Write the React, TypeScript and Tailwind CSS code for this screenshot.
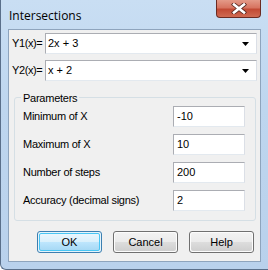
import React from "react";

const font = { fontFamily: '"Liberation Sans", Arial, sans-serif' };

function Combo({ value }: { value: string }) {
  return (
    <div className="flex-1 h-[21px] bg-white border border-[#abadb3] border-b-[#e3e9ef] border-r-[#dbdfe6] flex items-center pl-[2px] pr-[7px] text-[11px] text-black">
      <span className="flex-1">{value}</span>
      <svg width="7" height="4" viewBox="0 0 7 4">
        <path d="M0 0 H7 L3.5 4 Z" fill="#000" />
      </svg>
    </div>
  );
}

function Field({ label, value }: { label: string; value: string }) {
  return (
    <div className="flex items-center h-[21px]">
      <span className="w-[150px] text-[11px] text-black tracking-[-0.25px]">{label}</span>
      <div className="w-[72px] h-[21px] bg-white border border-[#abadb3] border-b-[#e3e9ef] border-r-[#dbdfe6] flex items-center pl-[3px] text-[11px] text-black">
        {value}
      </div>
    </div>
  );
}

function Btn({ label, primary }: { label: string; primary?: boolean }) {
  return primary ? (
    <div className="w-[65px] h-[22px] rounded-[3px] border border-[#3c7fb1] p-[1px] bg-[#e5f4fc]">
      <div className="w-full h-full rounded-[2px] bg-[linear-gradient(#eaf6fd_0%,#d9f0fc_50%,#bee6fd_50%,#a7d9f5_100%)] border border-[#48c6f4] flex items-center justify-center text-[11px] text-black">
        {label}
      </div>
    </div>
  ) : (
    <div className="w-[65px] h-[22px] rounded-[3px] border border-[#707070] p-[1px] bg-[#fcfcfc]">
      <div className="w-full h-full rounded-[2px] bg-[linear-gradient(#f2f2f2_0%,#ebebeb_50%,#dddddd_50%,#cfcfcf_100%)] flex items-center justify-center text-[11px] text-black">
        {label}
      </div>
    </div>
  );
}

export default function App() {
  return (
    <div
      className="w-[268px] h-[270px] relative overflow-hidden bg-[linear-gradient(180deg,#c9def3_0%,#bed6ef_40%,#b9d1ec_100%)] border-l border-b border-[#5a6f8a] rounded-bl-[6px]"
      style={font}
    >
      <div className="h-[29px] flex items-center pl-[8px] pt-[2px] text-[12px] text-black" style={{ fontFamily: '"Open Sans", "Liberation Sans", sans-serif' }}>
        Intersections
      </div>
      <div className="absolute right-[7px] top-0 w-[45px] h-[18px] rounded-b-[4px] border border-t-0 border-[#6b2b22] bg-[linear-gradient(#e49a88_0%,#d77460_45%,#c24a34_55%,#cf6a52_100%)] flex items-center justify-center">
        <svg width="16" height="11" viewBox="0 0 16 11">
          <path d="M3 1.5 L13 9.5 M13 1.5 L3 9.5" stroke="#5a2a22" strokeWidth="4.2" strokeLinecap="square" />
          <path d="M3 1.5 L13 9.5 M13 1.5 L3 9.5" stroke="#ffffff" strokeWidth="2.6" strokeLinecap="square" />
        </svg>
      </div>
      <div className="ml-[7px] mr-[7px] h-[233px] border border-[#8ea4bd] bg-[#f0f0f0] flex flex-col">
        <div className="flex items-center mt-[3px] pl-[3px] pr-[3px]">
          <span className="w-[33px] text-[11px] text-black tracking-[-0.4px]">Y1(x)=</span>
          <Combo value="2x + 3" />
        </div>
        <div className="flex items-center mt-[6px] pl-[3px] pr-[3px]">
          <span className="w-[33px] text-[11px] text-black tracking-[-0.4px]">Y2(x)=</span>
          <Combo value="x + 2" />
        </div>
        <div className="relative ml-[5px] mr-[4px] mt-[16px] h-[124px] border border-[#d5dfe5] rounded-[3px] pl-[8px] pt-[8px] flex flex-col gap-[7px]">
          <span className="absolute -top-[8px] left-[6px] px-[2px] bg-[#f0f0f0] text-[11px] text-black tracking-[-0.25px]">Parameters</span>
          <Field label="Minimum of X" value="-10" />
          <Field label="Maximum of X" value="10" />
          <Field label="Number of steps" value="200" />
          <Field label="Accuracy (decimal signs)" value="2" />
        </div>
        <div className="flex mt-[10px] pl-[28px] gap-[11px]">
          <Btn label="OK" primary />
          <Btn label="Cancel" />
          <Btn label="Help" />
        </div>
      </div>
    </div>
  );
}
